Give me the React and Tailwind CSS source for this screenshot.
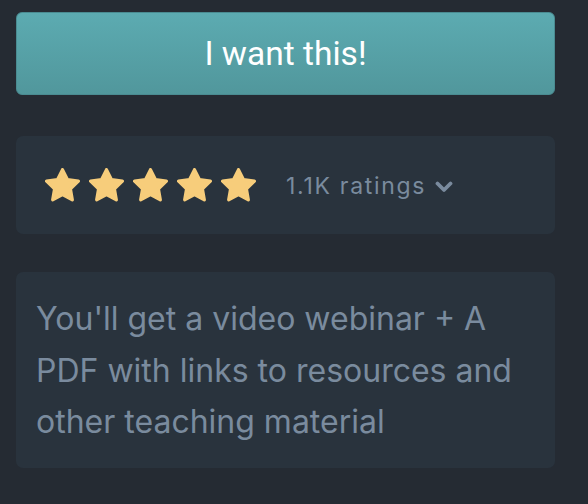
import React from "react";

function Star() {
  return (
    <svg width="35" height="35" viewBox="1 1 22 22" className="shrink-0">
      <polygon
        points="12,2 15.09,8.26 22,9.27 17,14.14 18.18,21.02 12,17.77 5.82,21.02 7,14.14 2,9.27 8.91,8.26"
        fill="#f7cd7b"
        stroke="#f7cd7b"
        strokeWidth="2"
        strokeLinejoin="round"
      />
    </svg>
  );
}

export default function App() {
  return (
    <div
      className="min-h-[504px] w-full bg-[#252b33] pl-4 pr-[33px] pt-3 pb-9"
      style={{ fontFamily: "Inter, 'Liberation Sans', sans-serif" }}
    >
      <button
        className="flex h-[83px] w-full items-center justify-center rounded-[6px] border border-[#4a8b91] bg-gradient-to-b from-[#5cabb1] to-[#51979c] pt-[1px] text-[33.5px] font-normal text-white"
        style={{ fontFamily: "Roboto, 'Liberation Sans', sans-serif" }}
      >
        I want this!
      </button>

      <div className="mt-[41px] flex h-[98px] items-center rounded-[7px] bg-[#29333d] pl-[29px]">
        <div className="flex items-center gap-[9px]">
          <Star />
          <Star />
          <Star />
          <Star />
          <Star />
        </div>
        <span className="ml-[30px] mt-[3px] text-[23px] tracking-[1.7px] text-[#7a8b9e]">1.1K ratings</span>
        <svg width="18" height="13" viewBox="0 0 18 13" className="ml-[9px] mt-[2px]">
          <path
            d="M2.5 3.5 L9 10 L15.5 3.5"
            fill="none"
            stroke="#7a8b9e"
            strokeWidth="3.8"
            strokeLinecap="round"
            strokeLinejoin="round"
          />
        </svg>
      </div>

      <div className="mt-[38px] rounded-[7px] bg-[#29333d] pl-5 pr-5 pt-[21px] pb-5">
        <p className="text-[32px] leading-[51.5px] text-[#7a8b9e]">
          You'll get a video webinar + A PDF with links to resources and other teaching material
        </p>
      </div>
    </div>
  );
}
